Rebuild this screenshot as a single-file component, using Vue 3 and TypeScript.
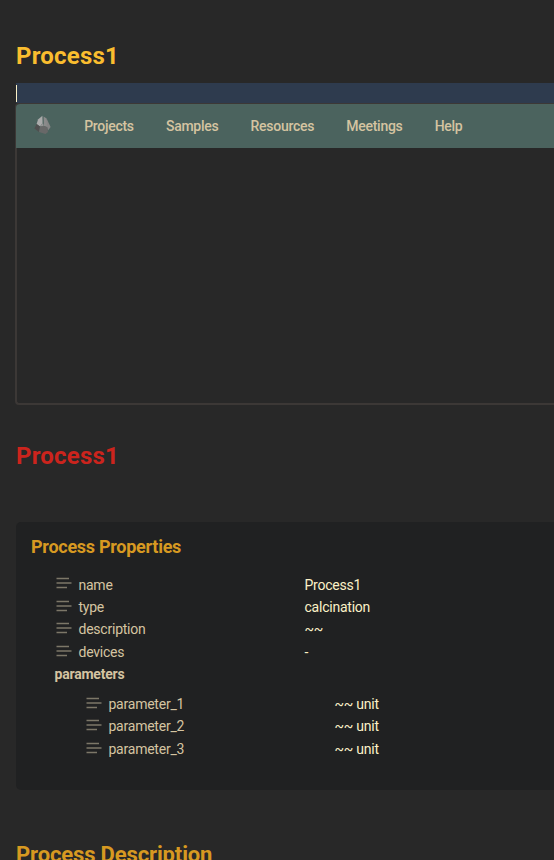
<script setup lang="ts">
interface Property {
  key: string
  value: string
}

const navItems: string[] = ['Projects', 'Samples', 'Resources', 'Meetings', 'Help']

const properties: Property[] = [
  { key: 'name', value: 'Process1' },
  { key: 'type', value: 'calcination' },
  { key: 'description', value: '~~' },
  { key: 'devices', value: '-' },
]

const parameters: Property[] = [
  { key: 'parameter_1', value: '~~ unit' },
  { key: 'parameter_2', value: '~~ unit' },
  { key: 'parameter_3', value: '~~ unit' },
]
</script>

<template>
  <main class="note">
    <h1 class="title">Process1</h1>
    <div class="active-line"><span class="caret"></span></div>
    <section class="embed">
      <nav class="navbar">
        <svg class="logo" viewBox="0 0 18 20">
          <path d="M8.4 0.8 L4 4.5 L2.6 9 L6 11.5 L8.6 8 Z" fill="#ababab" />
          <path d="M9.6 1.6 L12.6 3.5 L14.2 10.5 L13 12 L9.8 11 Z" fill="#8b8b8b" />
          <path d="M8.6 8 L6 11.5 L9.6 11.5 L9.3 9 Z" fill="#969696" />
          <path d="M12.6 3.5 L16.6 12 L14 15.5 L13 12 Z" fill="#858585" />
          <path d="M2.6 9 L6 11.5 L5 17 L0.4 13.5 Z" fill="#4f4f4f" />
          <path d="M6 11.5 L9.8 11 L13.3 12.2 L14 17 L11.5 19 L5 17 Z" fill="#686868" />
        </svg>
        <a v-for="item in navItems" :key="item" class="nav-item">{{ item }}</a>
      </nav>
    </section>
    <h1 class="title process-title">Process1</h1>
    <section class="card">
      <h3 class="card-title">Process Properties</h3>
      <div class="rows">
        <div v-for="p in properties" :key="p.key" class="row">
          <svg class="icon" viewBox="0 0 16 12">
            <path d="M0.5 1.5H13M0.5 6H15.5M0.5 10.5H11" />
          </svg>
          <span class="key">{{ p.key }}</span>
          <span class="value">{{ p.value }}</span>
        </div>
        <div class="group">parameters</div>
        <div class="nested">
          <div v-for="p in parameters" :key="p.key" class="row">
            <svg class="icon" viewBox="0 0 16 12">
              <path d="M0.5 1.5H13M0.5 6H15.5M0.5 10.5H11" />
            </svg>
            <span class="key">{{ p.key }}</span>
            <span class="value">{{ p.value }}</span>
          </div>
        </div>
      </div>
    </section>
    <h2 class="section-title">Process Description</h2>
  </main>
</template>

<style>
body {
  background: #282828;
}
</style>

<style scoped>
.note {
  box-sizing: border-box;
  height: 860px;
  overflow: hidden;
  padding: 40px 0 0 16px;
  background: #282828;
  font-family: Roboto, sans-serif;
  font-size: 14px;
  letter-spacing: -0.23px;
}
.title {
  margin: 0;
  font-size: 24px;
  line-height: 32px;
  font-weight: 700;
  letter-spacing: 0.2px;
  color: #fabd2f;
}
.active-line {
  display: flex;
  align-items: center;
  height: 20px;
  margin-top: 11px;
  background: #2e3b4e;
}
.caret {
  width: 1px;
  height: 17px;
  background: #fbf1c7;
}
.embed {
  box-sizing: border-box;
  height: 302px;
  margin-left: -1px;
  border: 2px solid #3c3836;
  border-top-width: 1px;
  border-right: 0;
  border-radius: 4px 0 0 4px;
}
.navbar {
  display: flex;
  align-items: center;
  gap: 32.2px;
  height: 44px;
  margin-left: -1px;
  padding-left: 18px;
  border-top-left-radius: 4px;
  background: #4b635e;
}
.logo {
  width: 18px;
  height: 20px;
  position: relative;
  top: -1px;
}
.nav-item {
  font-weight: 500;
  line-height: 22px;
  letter-spacing: -0.28px;
  color: #d5c4a1;
}
.process-title {
  margin-top: 35px;
  color: #cc241d;
}
.card {
  box-sizing: border-box;
  height: 268px;
  margin-top: 50px;
  padding: 13px 0 0 15px;
  border-radius: 5px 0 0 5px;
  background: #202122;
}
.card-title {
  margin: 0;
  font-size: 18px;
  line-height: 24px;
  font-weight: 700;
  letter-spacing: -0.27px;
  color: #d79921;
}
.rows {
  padding: 14.6px 0 0 23.6px;
}
.row {
  display: flex;
  align-items: center;
  height: 22.4px;
  line-height: 22.4px;
}
.icon {
  width: 16px;
  height: 12px;
  margin: -2.6px 6.5px 0 1.4px;
}
.icon path {
  fill: none;
  stroke: #7c7768;
  stroke-width: 1.3;
}
.key {
  width: 226px;
  color: #d5c4a1;
}
.value {
  color: #fbf1c7;
}
.group {
  height: 22.4px;
  line-height: 22.4px;
  font-weight: 700;
  color: #d5c4a1;
}
.nested {
  padding: 7.3px 0 0 30px;
}
.section-title {
  margin: 51px 0 0;
  font-size: 22px;
  line-height: 28px;
  font-weight: 700;
  letter-spacing: -0.14px;
  color: #d79921;
}
</style>
